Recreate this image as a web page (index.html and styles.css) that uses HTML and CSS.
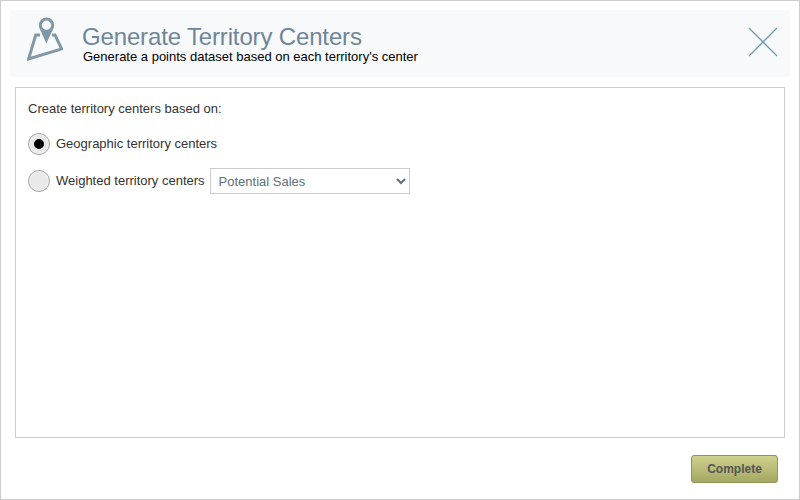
FILE: index.html
```html
<!DOCTYPE html>
<html lang="en">
<head>
  <meta charset="UTF-8">
  <meta name="viewport" content="width=device-width, initial-scale=1.0">
  <title>Generate Territory Centers</title>
  <link rel="stylesheet" href="styles.css">
</head>
<body>
  <div class="dialog">
    <div class="header">
      <svg class="header-icon" width="36" height="46" viewBox="0 0 36 46" fill="none">
        <path d="M13 18 L8.7 18 L1.6 42 L34.7 32 L28 18 L25 18" stroke="#7f97a9" stroke-width="2.9"/>
        <circle cx="19.5" cy="8.3" r="6.2" stroke="#7f97a9" stroke-width="3"/>
        <path d="M13 12 L19.3 26.5 L26 12 Q19.5 18 13 12 Z" fill="#7f97a9"/>
      </svg>
      <div class="header-text">
        <div class="title">Generate Territory Centers</div>
        <div class="subtitle">Generate a points dataset based on each territory's center</div>
      </div>
      <svg class="close-icon" width="30" height="30" viewBox="0 0 30 30" fill="none">
        <path d="M1 1 L29 29 M29 1 L1 29" stroke="#6f9ab0" stroke-width="1.3"/>
      </svg>
    </div>

    <div class="panel">
      <p class="prompt">Create territory centers based on:</p>
      <div class="option">
        <span class="radio checked"></span>
        <span class="option-label">Geographic territory centers</span>
      </div>
      <div class="option">
        <span class="radio"></span>
        <span class="option-label">Weighted territory centers</span>
        <select class="field">
          <option>Potential Sales</option>
        </select>
      </div>
    </div>

    <div class="footer">
      <button class="complete-btn">Complete</button>
    </div>
  </div>
</body>
</html>
```

FILE: styles.css
```css
* {
  box-sizing: border-box;
}

body {
  margin: 0;
  font-family: "Liberation Sans", Arial, sans-serif;
  background-color: #fff;
}

.dialog {
  width: 800px;
  height: 500px;
  padding: 9px;
  border: 1px solid #ccc;
  display: flex;
  flex-direction: column;
}

.header {
  height: 67px;
  background-color: #f8f9fb;
  display: flex;
  align-items: flex-start;
  padding-left: 17px;
}

.header-icon {
  margin-top: 7px;
}

.header-text {
  margin-left: 19px;
  flex: 1;
}

.title {
  font-size: 24px;
  line-height: 27px;
  margin-top: 13px;
  color: #6f8599;
  letter-spacing: -0.15px;
}

.subtitle {
  font-size: 13px;
  line-height: 14px;
  margin-left: 1px;
  color: #000;
}

.close-icon {
  margin: 17px 12px 0 0;
}

.panel {
  flex: 1;
  margin: 10px 5px 0;
  padding: 13px 12px;
  border: 1px solid #ccc;
  font-size: 13px;
  color: #333;
}

.prompt {
  margin: 0 0 14px;
  line-height: 16px;
}

.option {
  display: flex;
  align-items: center;
  gap: 6px;
  height: 26px;
  margin-bottom: 11px;
}

.option-label {
  margin-bottom: 2px;
}

.radio {
  width: 22px;
  height: 22px;
  border-radius: 50%;
  border: 1px solid #a3a3a3;
  background-color: #e9e9e9;
  box-shadow: inset 0 0 0 1px #f5f5f5;
  display: flex;
  align-items: center;
  justify-content: center;
}

.radio.checked::after {
  content: "";
  width: 10px;
  height: 10px;
  border-radius: 50%;
  background-color: #000;
}

.field {
  width: 200px;
  height: 26px;
  margin-left: -1px;
  padding-left: 4px;
  border: 1px solid #ccc;
  background-color: #fff;
  font-family: inherit;
  font-size: 13px;
  color: #5f6f7d;
}

.footer {
  display: flex;
  justify-content: flex-end;
  padding: 17px 12px 7px 0;
}

.complete-btn {
  width: 87px;
  height: 28px;
  border: 1px solid #8f9658;
  border-radius: 3px;
  background: linear-gradient(#cfd18c, #a3a862);
  font-family: inherit;
  font-size: 12px;
  font-weight: bold;
  color: #555;
}
```
